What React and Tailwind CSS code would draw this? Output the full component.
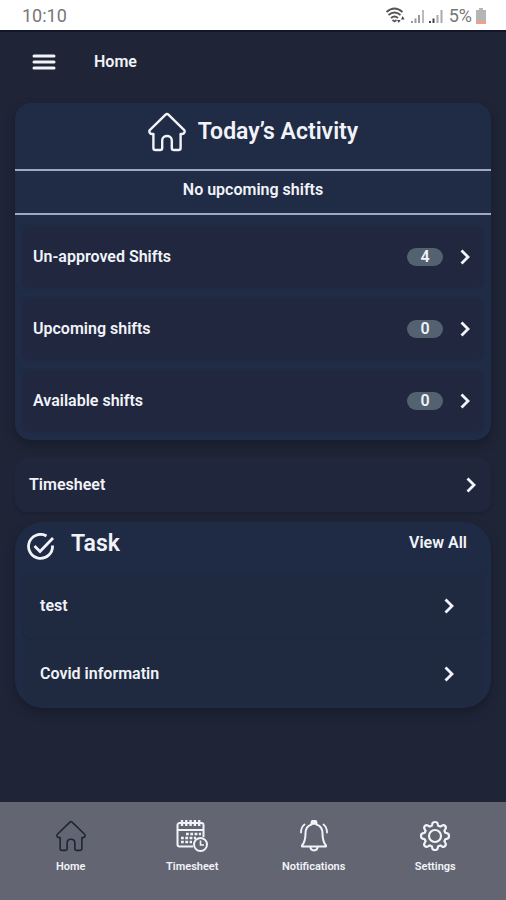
import { useState } from 'react';

const shifts = [
  { label: 'Un-approved Shifts', count: 4 },
  { label: 'Upcoming shifts', count: 0 },
  { label: 'Available shifts', count: 0 },
];

const tasks = ['test', 'Covid informatin'];

function HomeIcon({ className, strokeWidth = 2.4 }) {
  return (
    <svg viewBox="0 0 38 40" className={className} fill="none" stroke="currentColor" strokeWidth={strokeWidth} strokeLinejoin="round" strokeLinecap="round" aria-hidden="true">
      <path d="M17.6 2.6 2 17.8c-1.4 1.5-.3 4.2 1.9 4.2h1.5v14c0 1.3.7 2 2 2h4.800c1.300 0 2-.7 2-2v-7.600c0-5.800 9.600-5.800 9.600 0V36c0 1.300.7 2 2 2h4.800c1.300 0 2-.7 2-2V22h1.500c2.200 0 3.300-2.700 1.900-4.200L20.400 2.600c-.8-.8-2-.8-2.800 0Z" />
    </svg>
  );
}

function Chevron() {
  return (
    <svg viewBox="0 0 12 18" className="h-[18px] w-3 shrink-0" fill="none" stroke="currentColor" strokeWidth="2.8" aria-hidden="true">
      <path d="m2.500 2.500 6.500 6.500-6.500 6.500" />
    </svg>
  );
}

function TaskIcon() {
  return (
    <svg viewBox="0 0 28 28" className="size-7" fill="none" stroke="currentColor" strokeWidth="2.8" aria-hidden="true">
      <path d="M19.500 3A12 12 0 1 0 25.500 12.500" />
      <path d="m7.500 13 5.500 5.500L26 5" />
    </svg>
  );
}

function CalendarIcon() {
  return (
    <svg viewBox="0 0 32 32" className="size-8" fill="none" stroke="currentColor" strokeWidth="2" aria-hidden="true">
      <path d="M17 26.500H3.500a2 2 0 0 1-2-2V5a2 2 0 0 1 2-2h22a2 2 0 0 1 2 2v12M1.500 10h26" />
      <path d="M6 0v6M10.300 0v6M14.600 0v6M18.900 0v6M23.200 0v6" strokeWidth="2.400" />
      <path d="M10 14h15M5 18h15M5 22h11" strokeWidth="2.400" strokeDasharray="2.800 1.500" />
      <circle cx="24.500" cy="24.500" r="6.500" />
      <path d="M24.500 20.500v4.500h3.500" strokeWidth="1.600" />
    </svg>
  );
}

function BellIcon() {
  return (
    <svg viewBox="0 0 32 32" className="size-8" fill="none" stroke="currentColor" strokeWidth="2" strokeLinejoin="round" strokeLinecap="round" aria-hidden="true">
      <path d="M13.500 4.500V3a2.500 2.500 0 0 1 5 0v1.500c4 1.200 6 4.500 6 9 0 6 .5 8.500 3.500 12v1H4v-1c3-3.500 3.500-6 3.500-12 0-4.500 2-7.800 6-9Z" />
      <path d="M13.500 3.200a2.500 2.500 0 0 1 5 0v1.500h-5Z" fill="currentColor" stroke="none" />
      <path d="M12.500 27c0 4.500 7 4.500 7 0" />
      <path d="M6.500 4.500C4.300 6.200 3 9 3 12.500M25.500 4.500c2.200 1.700 3.500 4.500 3.500 8" strokeWidth="1.800" />
    </svg>
  );
}

function GearIcon() {
  return (
    <svg viewBox="0 0 32 32" className="size-8" fill="none" stroke="currentColor" strokeWidth="2.2" strokeLinejoin="round" aria-hidden="true">
      <path d="M13.200 4.200Q13.500 2 16 2t2.800 2.200l.4 1.500 2.100.9 1.500-.9q1.800-1.200 3.300.2t.2 3.300l-.9 1.500.9 2.100 1.500.4Q30 13.500 30 16t-2.200 2.800l-1.500.4-.9 2.100.9 1.500q1.200 1.800-.2 3.300t-3.300.2l-1.500-.9-2.100.9-.4 1.500Q18.500 30 16 30t-2.800-2.200l-.4-1.500-2.100-.9-1.500.9q-1.800 1.200-3.300-.2t-.2-3.300l.9-1.500-.9-2.100-1.500-.4Q2 18.500 2 16t2.200-2.800l1.500-.4.9-2.100-.9-1.500Q4.500 7.400 5.900 5.900t3.300-.2l1.500.9 2.100-.9Z" />
      <circle cx="16" cy="16" r="6" />
    </svg>
  );
}

function StatusBar() {
  return (
    <div className="flex h-[30px] items-center justify-between bg-white pt-0.5 pr-5 pl-[22px] text-[#777777]">
      <span className="text-lg">10:10</span>
      <div className="flex items-center">
        <svg viewBox="0 0 60 18" className="h-[18px] w-[60px]" fill="none" stroke="currentColor" aria-hidden="true">
          <path d="M1.500 5q8-7 16 0M3.500 8q6-5 12 0M6 11q3.500-3 7 0M7.500 13l2 1.500 2-1.500" stroke="#555555" strokeWidth="1.700" />
          <path d="m12 13 1.800 3 1.800-3M16 12.500l1.700-3.500 1.800 3.500" fill="#444444" stroke="none" />
          <path d="M27 16v-2M30.500 16v-4.500M34 16V8" stroke="#999999" strokeWidth="2" />
          <path d="M38 16V3" stroke="#bbbbbb" strokeWidth="2" />
          <path d="M45 16v-2M48.500 16v-4.500" stroke="#444444" strokeWidth="2" />
          <path d="M52.500 16V8M56.500 16V3" stroke="#aaaaaa" strokeWidth="2" />
        </svg>
        <span className="ml-1 text-lg">5%</span>
        <svg viewBox="0 0 10 16" className="ml-1 h-4 w-2.5" aria-hidden="true">
          <path d="M3 0h4v2h3v14H0V2h3Z" fill="#b5b5b5" />
          <path d="M0 13h10v3H0Z" fill="#f0a088" />
        </svg>
      </div>
    </div>
  );
}

const navItems = [
  { label: 'Home', icon: <HomeIcon className="size-8" strokeWidth={2} /> },
  { label: 'Timesheet', icon: <CalendarIcon /> },
  { label: 'Notifications', icon: <BellIcon /> },
  { label: 'Settings', icon: <GearIcon /> },
];

export default function App() {
  const [active, setActive] = useState('Home');

  return (
    <div className="flex min-h-screen flex-col bg-[#1f2537] font-[Roboto,sans-serif] text-[#f1f3f8]">
      <StatusBar />

      <header className="flex h-16 items-center gap-[38px] border-t-2 border-[#12162a] px-8 pb-0.5">
        <button type="button" aria-label="Open menu">
          <svg viewBox="0 0 24 18" className="h-[18px] w-6" stroke="currentColor" strokeWidth="3" strokeLinecap="round" aria-hidden="true">
            <path d="M2 3h20M2 9h20M2 15h20" />
          </svg>
        </button>
        <h1 className="text-base font-semibold">Home</h1>
      </header>

      <main className="flex flex-1 flex-col px-[15px] pt-[9px]">
        <section className="rounded-2xl bg-[#202b45] pb-[9px] shadow-[0_5px_10px_#181c2b]">
          <div className="flex h-[66px] items-center justify-center gap-3 pb-2">
            <HomeIcon className="h-10 w-[38px]" />
            <h2 className="text-[23px] font-semibold">Today’s Activity</h2>
          </div>
          <p className="flex h-[46px] items-center justify-center border-y-2 border-[#a3a7bb] pb-1 text-base font-semibold">
            No upcoming shifts
          </p>
          <div className="flex flex-col gap-3 px-2 pt-3">
            {shifts.map((shift) => (
              <button key={shift.label} type="button" className="flex h-[60px] items-center rounded-lg bg-[#20273f] pr-3 pl-2.5 text-left shadow-[0_0_3px_#20273f]">
                <span className="flex-1 text-base font-semibold">{shift.label}</span>
                <span className="mr-4 h-[18px] w-9 rounded-full bg-[#536170] text-center text-base leading-[18px] font-semibold">{shift.count}</span>
                <Chevron />
              </button>
            ))}
          </div>
        </section>

        <button type="button" className="mt-[18px] flex h-[54px] items-center justify-between rounded-xl bg-[#20273d] pr-[14px] pl-[14px] text-left shadow-[0_2px_3px_#1b2031]">
          <span className="text-base font-semibold">Timesheet</span>
          <Chevron />
        </button>

        <section className="mt-2.5 rounded-[28px] bg-[#1f2b44] pb-0.5 shadow-[0_5px_10px_#181c2b]">
          <div className="flex h-[52px] items-center pr-6 pb-0.5 pl-3">
            <TaskIcon />
            <h2 className="ml-4 flex-1 pb-1.5 text-[23px] font-semibold">Task</h2>
            <a href="#tasks" className="pb-2 text-base font-semibold">View All</a>
          </div>
          <div className="flex flex-col gap-1 px-2">
            {tasks.map((task) => (
              <button key={task} type="button" className="flex h-16 items-center justify-between rounded-b-lg bg-[#1f2a41] pr-7 pl-[17px] text-left text-base font-semibold shadow-[0_1px_2px_#1d2639] last:rounded-b-[20px] last:shadow-none">
                {task}
                <Chevron />
              </button>
            ))}
          </div>
        </section>
      </main>

      <nav className="grid h-[98px] grid-cols-4 bg-[#636672] px-[10px] pt-[18px]">
        {navItems.map((item) => (
          <button
            key={item.label}
            type="button"
            onClick={() => setActive(item.label)}
            className="flex flex-col items-center gap-2 text-[11px] leading-[14px] font-semibold"
          >
            <span className={active === item.label ? 'text-[#1f2537]' : ''}>{item.icon}</span>
            {item.label}
          </button>
        ))}
      </nav>
    </div>
  );
}
